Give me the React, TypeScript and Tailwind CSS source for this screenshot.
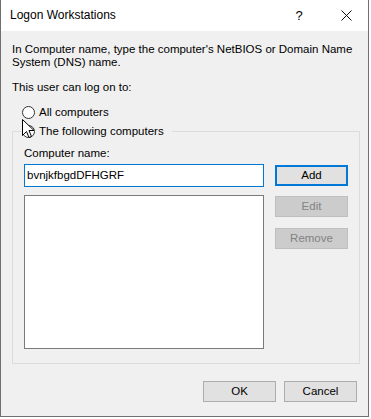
import React from "react";

const font = { fontFamily: '"Liberation Sans", Arial, sans-serif' };

function Radio() {
  return (
    <span className="inline-block w-[13px] h-[13px] rounded-full border border-[#333333] bg-white shrink-0" />
  );
}

function Btn({
  children,
  variant = "normal",
}: {
  children: React.ReactNode;
  variant?: "normal" | "default" | "disabled";
}) {
  const cls =
    variant === "default"
      ? "border-2 border-[#0078d7] bg-[#e1e1e1] text-black"
      : variant === "disabled"
      ? "border border-[#bfbfbf] bg-[#cccccc] text-[#838383]"
      : "border border-[#adadad] bg-[#e1e1e1] text-black";
  return (
    <div
      className={`w-[73px] h-[21px] flex items-center justify-center text-[11.5px] leading-[13px] ${cls}`}
    >
      {children}
    </div>
  );
}

export default function App() {
  return (
    <div className="w-[371px] h-[419px] bg-white relative" style={font}>
      <div className="w-[369px] h-[417px] border-l border-r border-b border-[#6f6f6f] bg-[#f0f0f0] flex flex-col">
        {/* Title bar */}
        <div className="h-[31px] bg-white flex items-center shrink-0">
          <span className="ml-[9px] text-[12px] text-black leading-[13px] flex-1">
            Logon Workstations
          </span>
          <span className="w-[12px] text-[13px] text-black text-center mr-[36px] leading-[13px]">
            ?
          </span>
          <svg width="11" height="11" viewBox="0 0 11 11" className="mr-[16px]">
            <path d="M0.5 0.5 L10.5 10.5 M10.5 0.5 L0.5 10.5" stroke="#111" strokeWidth="1" fill="none" />
          </svg>
        </div>

        {/* Body */}
        <div className="flex flex-col text-[11.5px] leading-[13px] text-black">
          <p className="ml-[11px] mt-[12px] w-[342px]">
            In Computer name, type the computer's NetBIOS or Domain Name System (DNS) name.
          </p>
          <p className="ml-[11px] mt-[12px]">This user can log on to:</p>
          <div className="ml-[21px] mt-[12px] flex items-center gap-[4px]">
            <Radio />
            <span>All computers</span>
          </div>

          {/* Group box */}
          <div className="ml-[11px] mt-[12px] w-[348px] h-[233px] border border-[#dcdcdc] flex flex-col">
            <div className="-mt-[7px] ml-[8px] pl-[1px] pr-[8px] self-start bg-[#f0f0f0] flex items-center gap-[4px]">
              <Radio />
              <span>The following computers</span>
            </div>
            <div className="flex pl-[11px] gap-[11px]">
              <div className="flex flex-col w-[240px]">
                <span className="mt-[9px]">Computer name:</span>
                <div className="mt-[4px] h-[23px] border border-[#0078d7] bg-white flex items-center pl-[2px]">
                  bvnjkfbgdDFHGRF
                </div>
                <div className="mt-[8px] h-[154px] border border-[#7a7a7a] bg-white" />
              </div>
              <div className="flex flex-col pt-[27px] gap-[10px]">
                <Btn variant="default">Add</Btn>
                <Btn variant="disabled">Edit</Btn>
                <div className="mt-[1px]">
                  <Btn variant="disabled">Remove</Btn>
                </div>
              </div>
            </div>
          </div>

          <div className="flex justify-end gap-[8px] mt-[17px] pr-[11px]">
            <Btn>OK</Btn>
            <Btn>Cancel</Btn>
          </div>
        </div>
      </div>

      {/* Mouse cursor overlay */}
      <svg
        className="absolute left-[22px] top-[119px]"
        width="13"
        height="20"
        viewBox="0 0 13 20"
      >
        <path
          d="M0.5 0.5 L0.5 16.5 L4.5 12.5 L7 18.5 L9.5 17.5 L7 11.5 L12 11.5 Z"
          fill="white"
          stroke="black"
          strokeWidth="1"
          strokeLinejoin="miter"
        />
      </svg>
    </div>
  );
}
